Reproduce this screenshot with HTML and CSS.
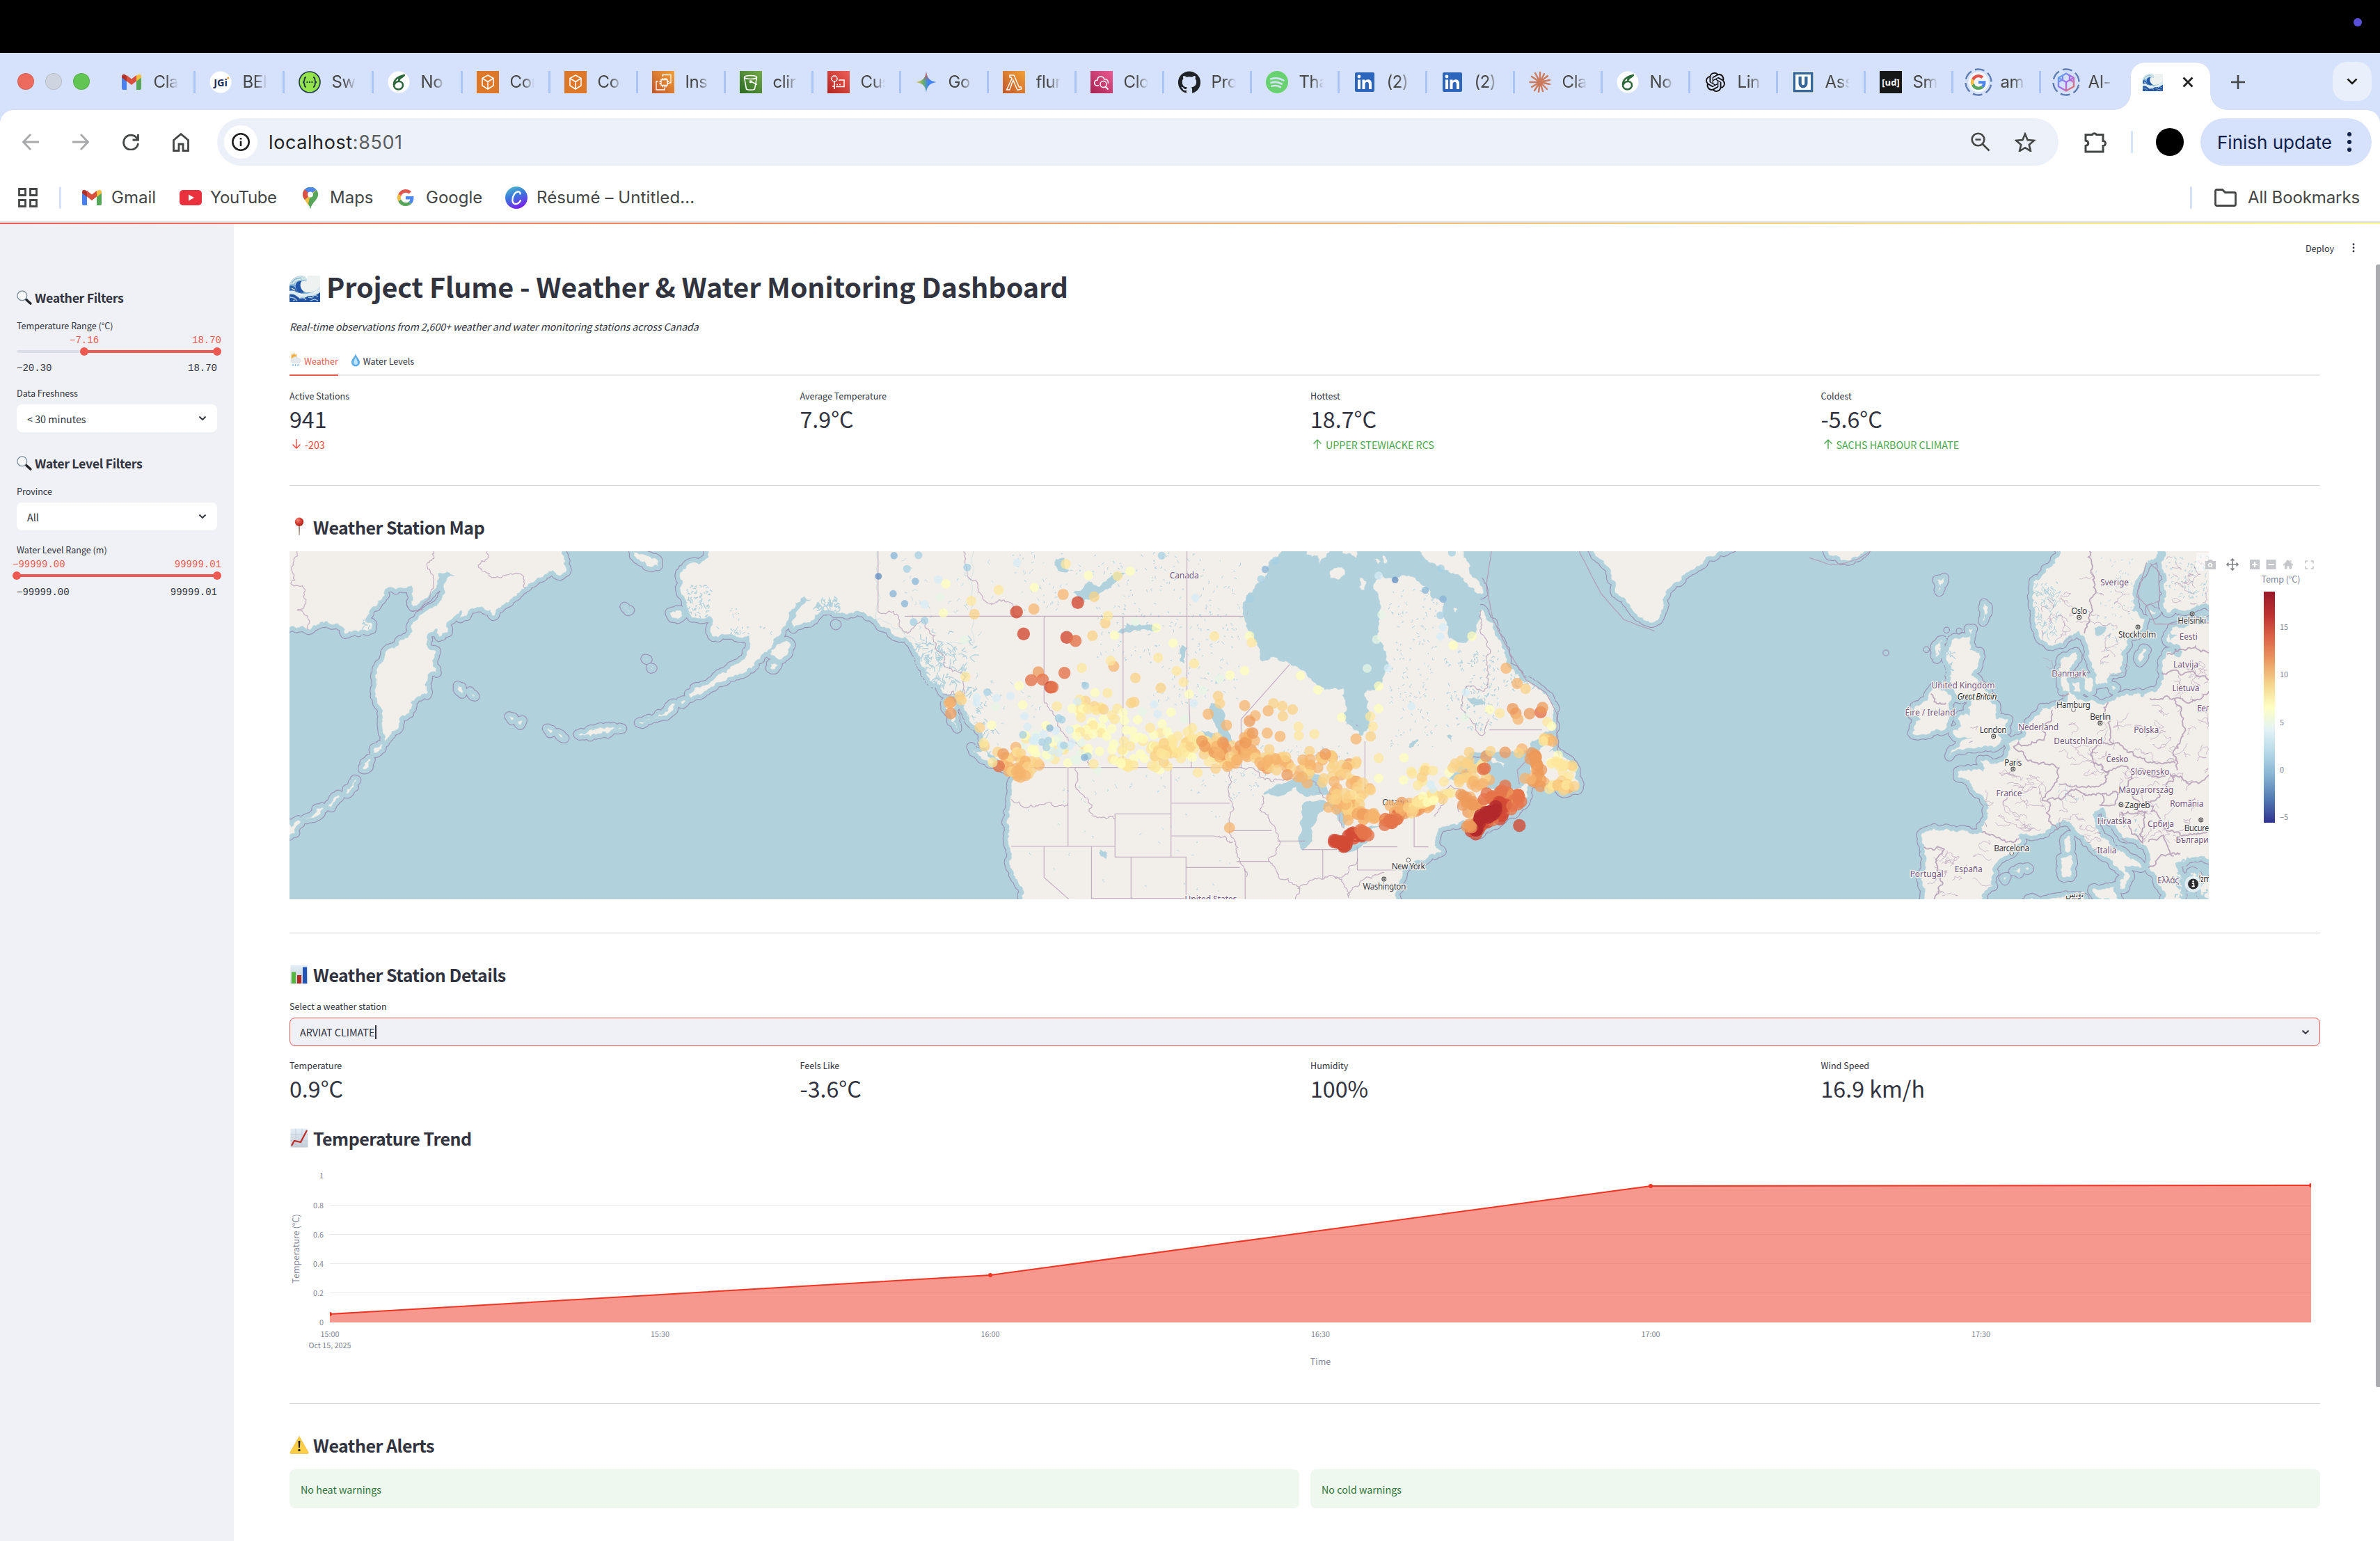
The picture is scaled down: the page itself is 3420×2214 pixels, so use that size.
FILE: index.html
```html
<!DOCTYPE html>
<html lang="en">
<head>
<meta charset="utf-8">
<title>Project Flume</title>
<link rel="stylesheet" href="styles.css">
</head>
<body>
<svg class="defs" width="0" height="0" aria-hidden="true">
  <defs>
    <linearGradient id="gOrange" x1="0" y1="1" x2="1" y2="0"><stop offset="0" stop-color="#c1562b"/><stop offset="1" stop-color="#f3a136"/></linearGradient>
    <linearGradient id="gGreen" x1="0" y1="1" x2="1" y2="0"><stop offset="0" stop-color="#2c6a22"/><stop offset="1" stop-color="#75ab4b"/></linearGradient>
    <linearGradient id="gRed" x1="0" y1="1" x2="1" y2="0"><stop offset="0" stop-color="#b3231f"/><stop offset="1" stop-color="#f0605a"/></linearGradient>
    <linearGradient id="gPink" x1="0" y1="1" x2="1" y2="0"><stop offset="0" stop-color="#a52350"/><stop offset="1" stop-color="#ec5a93"/></linearGradient>
    <linearGradient id="gGem" x1="0" y1="0" x2="1" y2="0"><stop offset="0" stop-color="#f2c33c"/><stop offset=".35" stop-color="#64b06c"/><stop offset=".6" stop-color="#4384f4"/><stop offset="1" stop-color="#4384f4"/></linearGradient>
    <linearGradient id="gGemTop" x1="0" y1="0" x2="0" y2="1"><stop offset="0" stop-color="#ea4335"/><stop offset=".45" stop-color="#ea4335" stop-opacity="0"/></linearGradient>
    <linearGradient id="gCanva" x1="0" y1="0" x2=".4" y2="1"><stop offset="0" stop-color="#4fc3c8"/><stop offset=".5" stop-color="#3a78dc"/><stop offset="1" stop-color="#7429ea"/></linearGradient>
    <linearGradient id="gCube" x1="0" y1="0" x2="1" y2="1"><stop offset="0" stop-color="#4fb4f2"/><stop offset=".5" stop-color="#a26cf0"/><stop offset="1" stop-color="#f4744f"/></linearGradient>
    <linearGradient id="gSheet" x1="0" y1="0" x2="0" y2="1"><stop offset="0" stop-color="#e4eef6"/><stop offset="1" stop-color="#c3ccd6"/></linearGradient>
    <linearGradient id="gTemp" x1="0" y1="0" x2="0" y2="1"><stop offset="0" stop-color="#98182a"/><stop offset=".1" stop-color="#bd3230"/><stop offset=".2" stop-color="#dd6448"/><stop offset=".3" stop-color="#eb9b62"/><stop offset=".4" stop-color="#f5d58c"/><stop offset=".5" stop-color="#feffc2"/><stop offset=".6" stop-color="#e2f2f6"/><stop offset=".7" stop-color="#b4d8e7"/><stop offset=".8" stop-color="#83b1d1"/><stop offset=".9" stop-color="#5079b3"/><stop offset="1" stop-color="#313390"/></linearGradient>
    <radialGradient id="gPin" cx=".35" cy=".3" r=".8"><stop offset="0" stop-color="#f08a7c"/><stop offset=".5" stop-color="#d43b30"/><stop offset="1" stop-color="#9c2019"/></radialGradient>

    <symbol id="gmail" viewBox="0 0 32 32"><path fill="#4a80ee" d="M2 8l7 5v14H4a2 2 0 0 1-2-2z"/><path fill="#56a65a" d="M23 13l7-5v17a2 2 0 0 1-2 2h-5z"/><path fill="#d94f3e" d="M9 6l7 5.500 7-5.500v8.500L16 20l-7-5.500z"/><path fill="#b0332a" d="M2 8c0-3 3-4 5-2.600L9 7v8L2 9.500z"/><path fill="#f3be42" d="M30 8c0-3-3-4-5-2.600L23 7v8l7-5.500z"/></symbol>
    <symbol id="jgi" viewBox="0 0 32 32"><circle cx="16" cy="16" r="15.500" fill="#fff"/><text x="16" y="21.500" class="ico-jgi">JGi</text><circle cx="26.800" cy="10" r="1.600" fill="#f0a13b"/></symbol>
    <symbol id="swagger" viewBox="0 0 32 32"><circle cx="16" cy="16" r="15" fill="#94e34c" stroke="#20394a" stroke-width="1.600"/><path d="M11 9c-5 0 0 7-5 7 5 0 0 7 5 7M21 9c5 0 0 7 5 7-5 0 0 7-5 7" fill="none" stroke="#20394a" stroke-width="1.800"/><path d="M11.500 16h2M15 16h2M18.500 16h2" stroke="#20394a" stroke-width="2"/></symbol>
    <symbol id="overleaf" viewBox="0 0 32 32"><circle cx="16" cy="16" r="15.500" fill="#fff"/><path d="M24 6C14 8 9 13 9 20c0 4 3 6.500 6.500 6.500S22 24 22 20.500 19.500 15 16 15c-3 0-5 2-6 4M24 6c-5 2-7 5-8 8" fill="none" stroke="#2c683c" stroke-width="2.600" stroke-linecap="round"/><path d="M13 11C16 7 20 6 25 6c-3 5-7 6-12 5z" fill="#2c683c"/></symbol>
    <symbol id="cube" viewBox="0 0 32 32"><rect width="32" height="32" fill="#dd782b"/><path d="M16 6l8 4.500v10.500L16 26l-8-5V10.500zM8 10.500l8 5 8-5M16 15.500V26" fill="none" stroke="#fff" stroke-width="1.500"/></symbol>
    <symbol id="chip" viewBox="0 0 32 32"><rect width="32" height="32" fill="url(#gOrange)"/><path d="M13 12.500h9v8h-9zM15 10v2.500M17.500 10v2.500M20 10v2.500M15 20.500v3M17.500 20.500v3M20 20.500v3M10.500 15H13M10.500 18H13M22 15h2.500M22 18h2.500M15 8V5.500h12V17h-2.500M8.500 15H6v12h12v-3" fill="none" stroke="#fff" stroke-width="1.300"/></symbol>
    <symbol id="bucket" viewBox="0 0 32 32"><rect width="32" height="32" fill="url(#gGreen)"/><path d="M6.500 9l3 17c3 1.700 9 1.700 12 0l3-17M16 15l9 4.500" fill="none" stroke="#fff" stroke-width="1.500"/><ellipse cx="15.500" cy="9" rx="9" ry="2.600" fill="none" stroke="#fff" stroke-width="1.500"/><path d="M14 13.500h3.500V17H14z" fill="#fff"/></symbol>
    <symbol id="custom" viewBox="0 0 32 32"><rect width="32" height="32" fill="url(#gRed)"/><circle cx="10" cy="11" r="4" fill="none" stroke="#fff" stroke-width="1.500"/><path d="M10 15v11M7 22h3M16 13h8v9.500H12M13 19.500h2M17 19.500h2" fill="none" stroke="#fff" stroke-width="1.500"/></symbol>
    <symbol id="gemini" viewBox="0 0 32 32"><path fill="url(#gGem)" d="M16 1c1 9 5 13.500 14.500 15C21 17.500 17 22 16 31 15 22 11 17.500 1.500 16 11 14.500 15 10 16 1z"/><path fill="url(#gGemTop)" d="M16 1c1 9 5 13.500 14.500 15C21 17.500 17 22 16 31 15 22 11 17.500 1.500 16 11 14.500 15 10 16 1z"/></symbol>
    <symbol id="lambda" viewBox="0 0 32 32"><rect width="32" height="32" fill="url(#gOrange)"/><path d="M10 6h6l7.500 17.500 2.500-.8 1 3-6 1.800-6.200-14.500-5 14H5.500L13 11l-1-2h-2z" fill="none" stroke="#fff" stroke-width="1.400"/></symbol>
    <symbol id="cloudw" viewBox="0 0 32 32"><rect width="32" height="32" fill="url(#gPink)"/><path d="M12 21H9c-5-1-4-8 1-8 0-6 8-7 10-1 4-1 6 3 5.500 6" fill="none" stroke="#fff" stroke-width="1.500"/><circle cx="18.500" cy="19" r="4.500" fill="none" stroke="#fff" stroke-width="1.500"/><path d="M21.500 22.500l4 4" stroke="#fff" stroke-width="2"/></symbol>
    <symbol id="github" viewBox="0 0 24 24"><path fill="#1f2328" d="M12 .3a12 12 0 0 0-3.800 23.400c.6.100.8-.3.800-.6v-2.200c-3.300.7-4-1.400-4-1.400-.6-1.400-1.400-1.800-1.400-1.800-1-.7.100-.7.100-.7 1.200 0 1.900 1.200 1.900 1.200 1 1.800 2.800 1.300 3.500 1 0-.8.400-1.300.7-1.600-2.700-.3-5.500-1.300-5.500-6 0-1.200.5-2.300 1.300-3.100-.2-.4-.6-1.600 0-3.200 0 0 1-.3 3.400 1.200a11.500 11.500 0 0 1 6 0c2.300-1.500 3.300-1.200 3.300-1.200.6 1.600.2 2.800 0 3.200.9.800 1.300 1.900 1.300 3.200 0 4.600-2.800 5.600-5.500 5.900.5.400.9 1 .9 2.200v3.300c0 .3.100.7.800.6A12 12 0 0 0 12 .3"/></symbol>
    <symbol id="spotify" viewBox="0 0 32 32"><circle cx="16" cy="16" r="16" fill="#67d26f"/><path d="M7 11.500c6-1.800 13-1.200 18.500 2M7.500 16.800c5-1.500 11-.9 15.500 1.800M8.500 21.700c4-1.200 8.500-.7 12.500 1.500" fill="none" stroke="#d6e1fb" stroke-width="2.600" stroke-linecap="round"/></symbol>
    <symbol id="linkedin" viewBox="0 0 32 32"><rect x="2" y="2" width="28" height="28" rx="2" fill="#2b66bc"/><path d="M6 12.500h4V26H6zM12.500 12.500h4v2c2-3.200 9.500-3.400 9.500 3.500v8h-4v-7c0-4.500-5.500-4-5.500 0v7h-4z" fill="#fff"/><circle cx="8" cy="8" r="2.400" fill="#fff"/></symbol>
    <symbol id="claude" viewBox="0 0 32 32"><path d="M16 16V2M16 16l6-12M16 16L27 7M16 16l14-3M16 16l14 3M16 16l10 10M16 16l4 13M16 16l-2 14M16 16L8 28M16 16L4 23M16 16H1.500M16 16L4 8M16 16L9 3" stroke="#cd7a5c" stroke-width="2.400" stroke-linecap="round"/></symbol>
    <symbol id="openai" viewBox="0 0 24 24"><path fill="#111" d="M22.300 9.800a6 6 0 0 0-.5-4.900 6 6 0 0 0-6.500-2.900A6.100 6.100 0 0 0 5 4.200a6 6 0 0 0-4 2.900 6 6 0 0 0 .7 7.100 6 6 0 0 0 .5 4.900 6 6 0 0 0 6.500 2.900A6 6 0 0 0 13.300 24a6 6 0 0 0 5.700-4.200 6 6 0 0 0 4-2.900 6 6 0 0 0-.7-7.100zm-9 12.600a4.500 4.500 0 0 1-2.900-1l5-2.900a.8.800 0 0 0 .3-.7v-6.700l2 1.200v5.600a4.500 4.500 0 0 1-4.400 4.500zM3.600 18.300a4.500 4.500 0 0 1-.5-3l4.900 2.800a.8.800 0 0 0 .8 0l5.800-3.400v2.400L9.700 20a4.500 4.500 0 0 1-6.100-1.700zM2.300 7.900a4.500 4.500 0 0 1 2.400-2v5.700a.8.800 0 0 0 .4.700l5.800 3.300-2 1.200-4.900-2.800a4.500 4.500 0 0 1-1.700-6.100zm16.600 3.900l-5.800-3.400 2-1.200L20 10a4.500 4.500 0 0 1-.7 8.100v-5.700a.8.800 0 0 0-.4-.6zm2-3.100l-4.800-2.800a.8.800 0 0 0-.8 0L9.400 9.300V6.900l4.900-2.800a4.500 4.500 0 0 1 6.600 4.600zM8.300 12.900l-2-1.200V6.100a4.500 4.500 0 0 1 7.400-3.500l-5 2.900a.8.800 0 0 0-.4.600zm1.100-2.400L12 9l2.600 1.500v3L12 15l-2.600-1.500z"/></symbol>
    <symbol id="usq" viewBox="0 0 32 32"><rect width="32" height="32" fill="#eef4f8"/><rect x="1.500" y="1.500" width="29" height="29" fill="#37679a"/><rect x="5" y="5" width="22" height="22" fill="#fff"/><path d="M9.500 8v10a6.500 6.500 0 0 0 13 0V8h-4.300v10c0 3-4.400 3-4.400 0V8z" fill="#37679a"/></symbol>
    <symbol id="udsq" viewBox="0 0 32 32"><rect width="32" height="32" fill="#161818"/><text x="16" y="21" class="ico-ud">[ud]</text></symbol>
    <symbol id="google" viewBox="0 0 48 48"><path fill="#e2544a" d="M24 9.500c3.500 0 6.700 1.200 9.200 3.600l6.900-6.900A24 24 0 0 0 2.600 13.200l8 6.200C12.400 13.700 17.700 9.500 24 9.500z"/><path fill="#4d86ee" d="M47 24.600c0-1.600-.2-3.100-.4-4.600H24v9h12.900a11 11 0 0 1-4.700 7.200l7.700 6c4.500-4.200 7.100-10.400 7.100-17.600z"/><path fill="#f2bd42" d="M10.500 28.600a14.500 14.500 0 0 1 0-9.200l-8-6.200a24 24 0 0 0 0 21.600z"/><path fill="#58a65c" d="M24 48c6.500 0 11.900-2.100 15.900-5.800l-7.700-6A14.500 14.500 0 0 1 10.500 28.600l-8 6.200A24 24 0 0 0 24 48z"/></symbol>
    <symbol id="gring" viewBox="0 0 40 40"><circle cx="20" cy="20" r="18.500" fill="none" stroke="#5f7db2" stroke-width="2.400" stroke-dasharray="14 5.400" transform="rotate(12 20 20)"/><circle cx="20" cy="20" r="14.500" fill="#f3f6fd"/><use href="#google" x="9" y="9" width="22" height="22"/></symbol>
    <symbol id="cring" viewBox="0 0 40 40"><circle cx="20" cy="20" r="18.500" fill="none" stroke="#5f7db2" stroke-width="2.400" stroke-dasharray="14 5.400" transform="rotate(12 20 20)"/><path d="M20 7.500l11 6.200v12.600L20 32.500 9 26.300V13.700zM9 13.700l11 6.300 11-6.300M20 20v12.500M15 10.500v6l-6 3.300M25 10.500v6l6 3.300" fill="none" stroke="url(#gCube)" stroke-width="2.400" stroke-linejoin="round"/></symbol>
    <symbol id="wave" viewBox="0 0 44 38"><path d="M0 13C2 5 11-1 19 .5c5 1 7 5 5 8.500-3-2-7-1-8 2-3 8 5 14 13 13 6-1 11-4 15-8v22H0z" fill="#7fb0d4"/><path d="M24 9c-3-2-7-1-8 2-3 8 5 14 13 13 6-1 11-4 15-8V0H26z" fill="#eef3f2"/><path d="M0 13C2 5 11-1 19 .5c5 1 7 5 5 8.500-2-3-5-3-7-1-4-1-7 1-8 5-2-1-5-1-9 0z" fill="#cfe3e6"/><path d="M9 13c1-4 4-6 8-5-3 6-1 12 5 16l-6 1c-5-2-8-7-7-12z" fill="#2156a8"/><path d="M3 11c3-6 9-8 14-7.500M5 14c4-5 8-7 13-8" stroke="#7fb4cd" stroke-width="1.200" fill="none"/><path d="M0 15c4-1 6 0 8 2 2 5 6 8 12 9l-8 4-12-2z" fill="#2e64a6"/><path d="M0 22c5-1 8 0 11 2 6 2 12 3 18 1 6-1 11-5 15-9v8c-5 4-9 5-13 5l-6 5H0z" fill="#dcebf0"/><path d="M0 27c4-1 8 0 11 3 5 4 11 3 16-1 6 1 11 0 17-5v14H0z" fill="#2454a0"/><path d="M1 31l6 1 4 4M14 33l5-2 5 4M27 31l5 1 4-4 5 2M30 36l6-2 5 2M5 36l3-1" stroke="#a9cbe0" stroke-width="1.300" fill="none"/><path d="M3 18l5 3M14 27l5 1M35 24l5-3" stroke="#fff" stroke-width="1.200"/></symbol>
    <symbol id="lens" viewBox="0 0 22 21"><circle cx="7.800" cy="7.800" r="6.900" fill="#f6f8fa" stroke="#7d8d9c" stroke-width="1.300"/><path d="M12.700 12.500l2 1.800" stroke="#777" stroke-width="1.800"/><path d="M14.300 14l5.500 5" stroke="#23262b" stroke-width="3.600" stroke-linecap="round"/></symbol>
    <symbol id="pin" viewBox="0 0 28 28"><path d="M13 12h2.200l-.5 14h-1.200z" fill="#a8897c"/><circle cx="14" cy="6.800" r="6.200" fill="url(#gPin)"/></symbol>
    <symbol id="bars" viewBox="0 0 28 28"><rect x="1.500" y=".5" width="25" height="27" fill="url(#gSheet)"/><path d="M3 10.500h6V27H3z" fill="#55b63c"/><path d="M11 15h6v12h-6z" fill="#b32821"/><path d="M19 3.500h6V27h-6z" fill="#2153b8"/></symbol>
    <symbol id="trend" viewBox="0 0 28 28"><rect x="1.500" y=".5" width="25" height="27" fill="url(#gSheet)"/><path d="M9 .5v27M18 .5v27M1.500 9h25M1.500 18h25" stroke="#b9c6d2" stroke-width=".7"/><path d="M3 25l4-7 9 2 9-17" fill="none" stroke="#c02b26" stroke-width="2.200"/></symbol>
    <symbol id="warn" viewBox="0 0 28 28"><path d="M14 1.500L27 24.500c.5 1 0 2-1.200 2H2.200C1 26.500.5 25.500 1 24.500z" fill="#fbce45" stroke="#e9b53a" stroke-width=".6"/><path d="M12.600 8h2.800l-.5 10h-1.800z" fill="#1b1b1b"/><circle cx="14" cy="21.500" r="1.700" fill="#1b1b1b"/></symbol>
    <symbol id="sunrain" viewBox="0 0 18 20"><circle cx="6.500" cy="6" r="4" fill="#f2ae3c"/><path d="M6.500 0v2M1 6H0M2.500 2l1 1M10.500 2l-1 1" stroke="#f2ae3c" stroke-width="1.200"/><path d="M4.500 14.500a3.600 3.600 0 0 1 0-7c1.500-3 6.500-3 8 0 5 .3 5 7 0 7z" fill="#e6eaee" stroke="#cfd4da" stroke-width=".5"/><path d="M5.500 16l-.8 3M9 16l-.8 3M12.500 16l-.8 3" stroke="#7ab8e8" stroke-width="1.300"/></symbol>
    <symbol id="drop" viewBox="0 0 14 20"><path d="M7 1c1 5 6 8 6 12.500a6 6 0 0 1-12 0C1 9 6 6 7 1z" fill="#58abe6"/><path d="M7 6c1 3 3 5 3 8a3 3 0 0 1-6 0c0-3 2-5 3-8z" fill="#bfe3f8"/></symbol>
    <symbol id="chev" viewBox="0 0 12 8"><path d="M1.500 1.500L6 6l4.500-4.500" fill="none" stroke="#31333f" stroke-width="1.900"/></symbol>
    <symbol id="up" viewBox="0 0 14 16"><path d="M7 15V2M1.500 7.500L7 2l5.500 5.500" fill="none" stroke="currentColor" stroke-width="1.400"/></symbol>
  </defs>
</svg>

<div class="screen-top"><span class="cam-dot"></span></div>

<header class="tabstrip">
  <div class="lights"><i class="light red"></i><i class="light grey"></i><i class="light green"></i></div>
  <div class="tabs-row">
    <div class="tab wide first"><svg><use href="#gmail"/></svg><span>Cla</span></div>
    <div class="tab wide"><svg><use href="#jgi"/></svg><span>BEI</span></div>
    <div class="tab wide"><svg><use href="#swagger"/></svg><span>Sw</span></div>
    <div class="tab wide"><svg><use href="#overleaf"/></svg><span>No</span></div>
    <div class="tab"><svg><use href="#cube"/></svg><span>Con</span></div>
    <div class="tab"><svg><use href="#cube"/></svg><span>Co</span></div>
    <div class="tab"><svg><use href="#chip"/></svg><span>Ins</span></div>
    <div class="tab"><svg><use href="#bucket"/></svg><span>clir</span></div>
    <div class="tab"><svg><use href="#custom"/></svg><span>Cus</span></div>
    <div class="tab"><svg><use href="#gemini"/></svg><span>Go</span></div>
    <div class="tab"><svg><use href="#lambda"/></svg><span>flur</span></div>
    <div class="tab"><svg><use href="#cloudw"/></svg><span>Clo</span></div>
    <div class="tab"><svg><use href="#github"/></svg><span>Pro</span></div>
    <div class="tab"><svg><use href="#spotify"/></svg><span>Tha</span></div>
    <div class="tab"><svg><use href="#linkedin"/></svg><span>(2)</span></div>
    <div class="tab"><svg><use href="#linkedin"/></svg><span>(2)</span></div>
    <div class="tab"><svg><use href="#claude"/></svg><span>Cla</span></div>
    <div class="tab"><svg><use href="#overleaf"/></svg><span>No</span></div>
    <div class="tab"><svg class="pad"><use href="#openai"/></svg><span>Lin</span></div>
    <div class="tab"><svg><use href="#usq"/></svg><span>Ass</span></div>
    <div class="tab"><svg><use href="#udsq"/></svg><span>Sm</span></div>
    <div class="tab ring"><svg><use href="#gring"/></svg><span>am</span></div>
    <div class="tab ring"><svg><use href="#cring"/></svg><span>AI-</span></div>
    <div class="tab-active">
      <svg class="fav"><use href="#wave"/></svg>
      <svg class="close" viewBox="0 0 16 16"><path d="M1.500 1.500l13 13M14.500 1.500l-13 13"/></svg>
    </div>
    <svg class="plus" viewBox="0 0 20 20"><path d="M10 0v20M0 10h20"/></svg>
  </div>
  <div class="tabsearch"><svg viewBox="0 0 16 10"><path d="M1.500 1.500L8 8l6.500-6.500"/></svg></div>
</header>

<section class="chrome">
  <div class="toolbar">
    <svg class="nav dim" viewBox="0 0 24 24"><path d="M12 1L1.500 12 12 23M1.500 12H24"/></svg>
    <svg class="nav dim" viewBox="0 0 24 24"><path d="M12 1l10.500 11L12 23M22.500 12H0"/></svg>
    <svg class="nav" viewBox="0 0 24 24"><path d="M21 7A10.500 10.500 0 1 0 22.500 14M22.500 1v8h-8"/></svg>
    <svg class="nav home" viewBox="0 0 24 28"><path d="M1.500 11.500L12 2.500l10.500 9V26.500h-7.500V17h-6v9.500H1.500z"/></svg>
    <div class="omnibox">
      <span class="info"><svg viewBox="0 0 26 26"><circle cx="13" cy="13" r="11.700"/><path d="M13 11.500V19M13 7v2.500"/></svg></span>
      <span class="url">localhost<b>:8501</b></span>
      <svg class="zoomi" viewBox="0 0 28 28"><circle cx="10.500" cy="10.500" r="8.800"/><path d="M17 17l9.500 9.500M6.500 10.500h8"/></svg>
      <svg class="star" viewBox="0 0 30 28"><path d="M15 2.500l3.600 8.600 9.300.8-7.100 6.100 2.200 9.100L15 22.200l-8 4.900 2.200-9.100-7.100-6.100 9.300-.8z"/></svg>
    </div>
    <svg class="puzzle" viewBox="0 0 32 32"><path d="M2 5.500h9.500a3.500 3.500 0 0 1 6 0H27v9a3.500 3.500 0 0 1 0 7V30H2v-8.500c5-1 5-6.500 0-7.500z"/></svg>
    <span class="vsep tool"></span>
    <span class="avatar"></span>
    <div class="update"><span>Finish update</span><i><em></em><em></em><em></em></i></div>
  </div>
  <div class="bookmarks">
    <svg class="grid" viewBox="0 0 28 28"><path d="M1.500 1.500h9v9h-9zM17.500 1.500h9v9h-9zM1.500 17.500h9v9h-9zM17.500 17.500h9v9h-9z"/></svg>
    <span class="vsep"></span>
    <svg class="bm b-gmail"><use href="#gmail"/></svg><span class="t-gmail">Gmail</span>
    <svg class="bm b-yt" viewBox="0 0 32 32"><rect y="5" width="32" height="22" rx="5" fill="#e9323e"/><path d="M13 11.500l8 4.500-8 4.500z" fill="#fff"/></svg><span class="t-yt">YouTube</span>
    <svg class="bm b-maps" viewBox="0 0 22 31"><path d="M11 31C9 22 0 18 0 10.500A11 11 0 0 1 22 10.500C22 18 13 22 11 31z" fill="#58a65c"/><path d="M0 10.500A11 11 0 0 1 11 0L11 11z M11 0a11 11 0 0 1 9 4.500L11 11z" fill="#4d86ee"/><path d="M0 10.500C0 7 1.500 4.500 3 3l8 8-8 7C1 15.500 0 13 0 10.500z" fill="#dc5044"/><path d="M3 18l8-7 8-7.500L11 22l-3 4z" fill="#f2bd42"/><path d="M11 12l9-7.500c4 6 1 11-3 15-3 3-5 7-6 11.500-.6-3-1.500-5-3-7.500z" fill="#58a65c"/><circle cx="11" cy="10.500" r="3.900" fill="#fff"/></svg><span class="t-maps">Maps</span>
    <svg class="bm b-goog"><use href="#google"/></svg><span class="t-goog">Google</span>
    <svg class="bm b-canva" viewBox="0 0 32 32"><circle cx="16" cy="16" r="16" fill="url(#gCanva)"/><path d="M21.500 10.500c.5-4-5-4.500-8.500.5-4 6-3.500 13.500 1.500 14 3 .3 6-2 7.500-5" fill="none" stroke="#fff" stroke-width="2.300" stroke-linecap="round"/></svg><span class="t-canva">Résumé – Untitled...</span>
    <span class="vsep last"></span>
    <svg class="folder" viewBox="0 0 32 26"><path d="M1.500 3.500a2 2 0 0 1 2-2h8l4 4h13a2 2 0 0 1 2 2v15a2 2 0 0 1-2 2h-25a2 2 0 0 1-2-2z"/></svg>
    <span class="t-all">All Bookmarks</span>
  </div>
</section>

<div class="app">
  <aside class="sidebar">
    <h2><svg><use href="#lens"/></svg>Weather Filters</h2>
    <label>Temperature Range (°C)</label>
    <div class="slider">
      <div class="vals"><span style="left:33.700%">−7.16</span><span class="end">18.70</span></div>
      <div class="track"><i style="left:33.700%;right:0"></i><b style="left:33.700%"></b><b style="left:100%"></b></div>
      <div class="ends"><span>−20.30</span><span>18.70</span></div>
    </div>
    <label class="l2">Data Freshness</label>
    <div class="select">&lt; 30 minutes<svg><use href="#chev"/></svg></div>
    <h2 class="second"><svg><use href="#lens"/></svg>Water Level Filters</h2>
    <label>Province</label>
    <div class="select">All<svg><use href="#chev"/></svg></div>
    <label class="l3">Water Level Range (m)</label>
    <div class="slider">
      <div class="vals"><span class="start">−99999.00</span><span class="end">99999.01</span></div>
      <div class="track"><i style="left:0;right:0"></i><b style="left:0"></b><b style="left:100%"></b></div>
      <div class="ends"><span>−99999.00</span><span>99999.01</span></div>
    </div>
  </aside>

  <main class="main">
    <div class="deploy"><span>Deploy</span><svg viewBox="0 0 4 14"><circle cx="2" cy="2" r="1.400"/><circle cx="2" cy="7" r="1.400"/><circle cx="2" cy="12" r="1.400"/></svg></div>
    <h1><svg><use href="#wave"/></svg><span>Project Flume - Weather &amp; Water Monitoring Dashboard</span></h1>
    <p class="sub">Real-time observations from 2,600+ weather and water monitoring stations across Canada</p>
    <nav class="views">
      <a class="on"><svg class="sr"><use href="#sunrain"/></svg>Weather</a>
      <a><svg class="dr"><use href="#drop"/></svg>Water Levels</a>
    </nav>
    <section class="metrics top">
      <div><h4>Active Stations</h4><strong>941</strong><p class="delta down"><svg class="flip"><use href="#up"/></svg>-203</p></div>
      <div><h4>Average Temperature</h4><strong>7.9°C</strong></div>
      <div><h4>Hottest</h4><strong>18.7°C</strong><p class="delta"><svg><use href="#up"/></svg>UPPER STEWIACKE RCS</p></div>
      <div><h4>Coldest</h4><strong>-5.6°C</strong><p class="delta"><svg><use href="#up"/></svg>SACHS HARBOUR CLIMATE</p></div>
    </section>
    <hr class="hr1">
    <h3><svg><use href="#pin"/></svg><span>Weather Station Map</span></h3>
    <section class="mapbox">
      <svg id="map" class="map" viewBox="416 792 2758 500" width="2758" height="500"></svg>
      <svg class="legend" viewBox="3174 792 160 500" width="160" height="500">
        <rect x="3253" y="850" width="16" height="332" fill="url(#gTemp)"/>
        <text x="3249.500" y="837" class="lt" textLength="56">Temp (°C)</text>
        <g class="tick"><text x="3276" y="905">15</text><text x="3276" y="973">10</text><text x="3276" y="1042">5</text><text x="3276" y="1110">0</text><text x="3276" y="1178">−5</text></g>
      </svg>
      <svg class="modebar" viewBox="3156 794 178 28" width="178" height="28">
        <rect x="3156" y="794" width="178" height="26" fill="#fff" opacity=".5"/>
        <g fill="#c6c7ca">
          <path fill-rule="evenodd" d="M3169 806h3l1.500-2h5l1.500 2h4v12h-15zM3176 808.500a3.400 3.400 0 1 0 .1 0zM3176 810.300a1.700 1.700 0 1 1-.1 0z"/>
          <path fill-rule="evenodd" d="M3233 804h14v14h-14zM3239 807v3h-3v2h3v3h2v-3h3v-2h-3v-3z"/>
          <path fill-rule="evenodd" d="M3256.500 804h14v14h-14zM3259.500 810v2h8v-2z"/>
          <path d="M3288 804.500l7.500 7-1.200 1.200-1.300-1.200v6h-3.500v-4h-3v4h-3.500v-6l-1.300 1.200-1.200-1.200 5-4.700v-1.800z M3290.500 805h2v3l-2-2z"/>
        </g>
        <path d="M3208 803v16M3200 811h16M3205.500 805.500l2.500-2.500 2.500 2.500M3205.500 816.500l2.500 2.500 2.500-2.500M3202.500 808.500L3200 811l2.500 2.500M3213.500 808.500l2.500 2.500-2.500 2.500" stroke="#7f8185" stroke-width="1.600" fill="none"/>
        <path d="M3313 809.500V806h3.500M3320.500 806h3.500v3.500M3324 813.500v3.500h-3.500M3316.500 817h-3.500v-3.500" stroke="#c6c7ca" stroke-width="1.600" fill="none"/>
      </svg>
    </section>
    <hr class="hr2">
    <h3><svg><use href="#bars"/></svg><span>Weather Station Details</span></h3>
    <label class="pick">Select a weather station</label>
    <div class="station"><span>ARVIAT CLIMATE</span><i></i><svg><use href="#chev"/></svg></div>
    <section class="metrics detail">
      <div><h4>Temperature</h4><strong>0.9°C</strong></div>
      <div><h4>Feels Like</h4><strong>-3.6°C</strong></div>
      <div><h4>Humidity</h4><strong>100%</strong></div>
      <div><h4>Wind Speed</h4><strong>16.9 km/h</strong></div>
    </section>
    <h3 class="h-trend"><svg><use href="#trend"/></svg><span>Temperature Trend</span></h3>
    <svg class="chart" viewBox="416 1657 2918 320" width="2918" height="320">
      <path d="M474 1731.500H3321M474 1773.500H3321M474 1815.500H3321M474 1857.500H3321" stroke="#e8eaf0" stroke-width="1"/>
      <path d="M474 1888L1423 1832 2372 1704 3321 1703V1900H474z" fill="#f04030" fill-opacity=".54"/>
      <path d="M474 1888L1423 1832 2372 1704 3321 1703" fill="none" stroke="#ee3524" stroke-width="2"/>
      <g fill="#ee3524"><path d="M474 1885a3 3 0 0 1 0 6z"/><circle cx="1423" cy="1832" r="3"/><circle cx="2372" cy="1704" r="3"/><path d="M3321 1700a3 3 0 0 0 0 6z"/></g>
      <g class="ct end"><text x="465" y="1693">1</text><text x="465" y="1736">0.8</text><text x="465" y="1778">0.6</text><text x="465" y="1820">0.4</text><text x="465" y="1862">0.2</text><text x="465" y="1904">0</text></g>
      <g class="ct mid"><text x="474" y="1921">15:00</text><text x="474" y="1937">Oct 15, 2025</text><text x="948.500" y="1921">15:30</text><text x="1423" y="1921">16:00</text><text x="1897.500" y="1921">16:30</text><text x="2372" y="1921">17:00</text><text x="2846.500" y="1921">17:30</text></g>
      <g class="ct mid big"><text x="1897.500" y="1961">Time</text><text transform="translate(430 1794) rotate(-90)">Temperature (°C)</text></g>
    </svg>
    <hr class="hr3">
    <h3 class="h-alert"><svg><use href="#warn"/></svg><span>Weather Alerts</span></h3>
    <section class="alerts"><div>No heat warnings</div><div>No cold warnings</div></section>
    <span class="scroll"></span>
  </main>
</div>
<script src="map.js"></script>
</body>
</html>
```
FILE: styles.css
```css
* { box-sizing: border-box; margin: 0; padding: 0; }
body {
  width: 3420px; height: 2214px; overflow: hidden; background: #fff; color: #31333f;
  font-family: "Noto Sans CJK SC", "Noto Sans", sans-serif; font-size: 14.300px;
}
.defs { position: absolute; }
i, em { font-style: normal; }
svg { display: block; flex: none; }

/* browser frame */
.screen-top { height: 76px; background: #000; position: relative; }
.cam-dot { position: absolute; left: 3382px; top: 26px; width: 12px; height: 12px; border-radius: 50%; background: #5a50d8; }
.tabstrip, .chrome { font-family: Inter, "Liberation Sans", sans-serif; color: #444746; }
.tabstrip { height: 82px; background: #d6e1fb; display: flex; align-items: center; padding-left: 25px; padding-right: 12px; }
.lights { display: flex; gap: 16px; width: 124.500px; }
.light { width: 24px; height: 24px; border-radius: 50%; border: 1px solid rgba(0,0,0,.1); }
.light.red { background: #ed6a5e; } .light.grey { background: #cfd5e0; } .light.green { background: #61c554; }
.tabs-row { display: flex; align-items: center; height: 82px; flex: 1; padding-top: 1px; }
.tab { width: 126px; height: 32px; display: flex; align-items: center; border-left: 3px solid #abc4f7; padding-left: 20px; }
.tab.wide { width: 128px; }
.tab.first { border-left-color: transparent; }
.tab svg { width: 32px; height: 32px; }
.tab svg.pad { width: 28px; height: 28px; margin: 0 2px; }
.tab.ring { padding-left: 16px; }
.tab.ring svg { width: 40px; height: 40px; }
.tab.ring span { margin-left: 12px; }
.tab span {
  margin-left: 16px; width: 35px; overflow: hidden; white-space: nowrap; font-size: 24px; line-height: 32px; letter-spacing: -.4px;
  -webkit-mask-image: linear-gradient(90deg, #000 50%, transparent); mask-image: linear-gradient(90deg, #000 50%, transparent);
}
.tab-active {
  position: relative; margin-left: 6px; width: 114px; height: 68px; align-self: flex-end; background: #fff; border-radius: 20px 20px 0 0;
  display: flex; align-items: center; padding: 0 24px 12px 17px; justify-content: space-between;
}
.tab-active::before, .tab-active::after { content: ""; position: absolute; bottom: 0; width: 24px; height: 24px; }
.tab-active::before { left: -24px; background: radial-gradient(circle at 0 0, transparent 23.500px, #fff 24px); }
.tab-active::after { right: -24px; background: radial-gradient(circle at 100% 0, transparent 23.500px, #fff 24px); }
.fav { width: 29px; height: 25px; }
.close { width: 16px; height: 16px; stroke: #1f1f1f; stroke-width: 2.800; }
.plus { width: 20px; height: 20px; margin-left: 30px; stroke: #444746; stroke-width: 2.600; }
.tabsearch { width: 56px; height: 56px; border-radius: 20px; background: #e9f0fc; display: flex; align-items: center; justify-content: center; }
.tabsearch svg { width: 16px; height: 10px; fill: none; stroke: #1f1f1f; stroke-width: 2.600; }

.chrome { position: relative; height: 164px; background: #fff; border-radius: 20px 20px 0 0; }
.chrome::before { content: ""; position: absolute; z-index: -1; inset: 0 0 120px; background: #d6e1fb; }
.chrome::after { content: ""; position: absolute; left: 0; right: 0; bottom: 0; height: 4px; background: linear-gradient(#dedede 50%, transparent 50%), linear-gradient(90deg, #ec5f57, #f2ae74 50%, #fdfb8e); }
.toolbar { height: 80px; padding-top: 12px; display: flex; align-items: center; padding-left: 32px; }
.nav { width: 24px; height: 24px; margin-right: 48px; fill: none; stroke: #444746; stroke-width: 2.800; }
.nav.dim { stroke: #a9aaab; }
.nav.home { height: 28px; margin-right: 40px; }
.omnibox { width: 2646px; height: 68px; border-radius: 34px; background: #ecf1f9; display: flex; align-items: center; padding-left: 10px; }
.info { width: 48px; height: 48px; border-radius: 50%; background: #fff; display: flex; align-items: center; justify-content: center; }
.info svg { width: 26px; height: 26px; fill: none; stroke: #1f1f1f; stroke-width: 2.600; }
.url { flex: 1; margin-left: 16px; font-size: 27px; letter-spacing: .6px; color: #1f1f1f; }
.url b { font-weight: 400; color: #5a5d60; }
.zoomi { width: 28px; height: 28px; fill: none; stroke: #444746; stroke-width: 2.600; margin-right: 35px; }
.star { width: 30px; height: 28px; fill: none; stroke: #444746; stroke-width: 2.600; margin-right: 33px; }
.puzzle { width: 32px; height: 32px; fill: none; stroke: #444746; stroke-width: 3; margin-left: 37px; }
.vsep { width: 3px; height: 32px; background: #d6e1fb; border-radius: 2px; }
.vsep.tool { margin-left: 35px; }
.avatar { width: 40px; height: 40px; border-radius: 50%; background: #000; margin-left: 33px; }
.update { margin-left: 24px; width: 246px; height: 68px; border-radius: 34px; background: #d6e1fb; color: #0f1f4a; display: flex; align-items: center; padding-left: 24px; font-size: 26px; white-space: nowrap; }
.update i { display: flex; flex-direction: column; gap: 5px; margin-left: auto; margin-right: 29px; }
.update em { width: 6px; height: 6px; border-radius: 50%; background: #0f1f4a; }
.bookmarks { height: 92px; display: flex; align-items: center; padding-left: 26px; font-size: 24px; white-space: nowrap; }
.bookmarks .grid { width: 28px; height: 28px; fill: none; stroke: #444746; stroke-width: 2.800; }
.bookmarks .vsep { margin-left: 31px; }
.bm { width: 32px; height: 32px; }
.b-gmail { margin-left: 28px; }
.bookmarks span[class^="t-"] { display: block; margin-top: -1px; }
.t-gmail { margin-left: 12px; width: 98px; }
.bookmarks .t-yt { margin-left: 12px; width: 133px; letter-spacing: -.4px; }
.bookmarks .b-maps { width: 22px; height: 31px; }
.t-maps { margin-left: 17px; width: 97px; }
.bookmarks .b-goog { width: 24px; height: 24px; }
.t-goog { margin-left: 17px; width: 113px; }
.t-canva { margin-left: 13px; flex: 1; letter-spacing: .1px; }
.b-canva { margin-left: 1px; }
.folder { width: 32px; height: 26px; fill: none; stroke: #444746; stroke-width: 2.800; margin-left: 32px; }
.t-all { margin-left: 16px; width: 190px; letter-spacing: -.1px; }
.ico-jgi { font: 700 14.500px "Open Sans", sans-serif; fill: #1c2f5c; text-anchor: middle; }
.ico-ud { font: 700 13px "Open Sans", sans-serif; fill: #fff; text-anchor: middle; }

/* dashboard */
.app { display: flex; height: 1892px; }
.sidebar { width: 336px; background: #f0f1f6; padding: 90px 24px 0; }
.sidebar h2 { height: 30px; display: flex; align-items: center; gap: 4px; font-size: 17.800px; font-weight: 700; letter-spacing: -.35px; line-height: 30px; }
.sidebar h2 svg { width: 22px; height: 21px; margin-top: 0; }
.sidebar h2.second { margin-top: 29px; }
label { display: block; height: 20px; line-height: 20px; font-size: 12.550px; }
.sidebar label { margin-top: 16px; }
.sidebar label.l2 { margin-top: 17px; }
.sidebar label.l3 { margin-top: 18px; }
.slider { font-family: "Liberation Mono", monospace; font-size: 14px; }
.vals { position: relative; height: 25px; padding-top: 1px; color: #ee5a52; line-height: 20px; }
.vals span { position: absolute; top: 1px; transform: translateX(-50%); }
.vals .end { left: auto; right: -6px; transform: none; }
.vals .start { left: -6px; transform: none; }
.track { position: relative; height: 4px; border-radius: 2px; background: #dcdfe9; }
.track i { position: absolute; top: 0; bottom: 0; background: #ee5a52; }
.track b { position: absolute; top: -4px; width: 12px; height: 12px; margin-left: -6px; border-radius: 50%; background: #ee5a52; }
.ends { display: flex; justify-content: space-between; height: 31px; padding-top: 12px; line-height: 20px; }
.select { height: 40px; margin-top: 6px; border-radius: 8px; background: #fff; display: flex; align-items: center; justify-content: space-between; padding: 0 15px; font-size: 14.300px; }
.select svg, .station svg { width: 12px; height: 8px; }

.main { position: relative; width: 3084px; padding: 63px 86px 0 80px; }
.deploy { position: absolute; top: 24px; right: 36px; height: 20px; display: flex; align-items: center; gap: 26px; font-size: 12.550px; }
.deploy svg { width: 4px; height: 14px; fill: #31333f; }
h1 { height: 60px; display: flex; align-items: center; font-size: 39.600px; font-weight: 700; letter-spacing: -.15px; white-space: nowrap; }
h1 svg { width: 44px; height: 38px; margin-right: 9px; }
h1 span { line-height: 60px; height: 68px; }
.sub { margin-top: 13px; height: 24px; line-height: 23px; font-style: italic; font-size: 14.200px; letter-spacing: -.05px; }
.views { margin-top: 14px; height: 44px; display: flex; gap: 18px; box-shadow: inset 0 -2px #e8e9ec; font-size: 12.550px; }
.views a { display: flex; align-items: center; }
.views a.on { color: #ee5a52; box-shadow: inset 0 -2px #ee5a52; }
.views .sr { width: 18px; height: 20px; margin-right: 3px; margin-top: -3px; }
.views .dr { width: 14px; height: 20px; margin-right: 4px; margin-top: -3px; }
.metrics { display: grid; grid-template-columns: repeat(4, 1fr); gap: 16px; margin-top: 19px; }
.metrics h4 { height: 20px; line-height: 19px; font-weight: 400; font-size: 12.550px; }
.metrics strong { display: block; margin-top: 1px; height: 44px; line-height: 43px; font-weight: 400; font-size: 32.200px; }
.delta { display: flex; align-items: center; margin-top: 2px; height: 24px; margin-bottom: 2px; padding-left: 3px; font-size: 14.300px; color: #4ba84c; white-space: nowrap; }
.delta svg { width: 14px; height: 16px; margin-right: 5px; }
.delta.down { color: #ee4438; }
.delta .flip { transform: scaleY(-1); }
.detail strong { margin-bottom: 1px; }
hr { border: 0; height: 1px; background: #d5d6d9; }
.hr1 { margin-top: 45px; } .hr2 { margin-top: 48px; } .hr3 { margin-top: 39px; }
h3 { margin-top: 40px; height: 40px; display: flex; align-items: center; font-size: 25px; font-weight: 700; letter-spacing: -.5px; }
h3 span { height: 38px; line-height: 36px; }
h3 svg { width: 28px; height: 28px; margin-right: 6px; margin-top: -2px; }
.h-trend { margin-top: 29px; }
.mapbox { position: relative; display: flex; margin-top: 14px; }
.modebar { position: absolute; left: 2740px; top: 2px; }
.lt { font-size: 12.550px; fill: #808495; }
.tick { font-size: 10.800px; fill: #808495; }
.pick { margin-top: 15px; }
.station { margin-top: 6px; height: 41px; border: 1.500px solid #ee5a52; border-radius: 8px; background: #f0f1f6; display: flex; align-items: center; padding: 0 14px; }
.detail { margin-top: 18px; }
.station span { font-size: 14.300px; }
.station i { width: 2px; height: 20px; background: #31333f; margin-left: 1px; }
.station svg { margin-left: auto; }
.chart { margin-top: 1px; }
.ct { font-size: 10.750px; fill: #808495; }
.ct.end { text-anchor: end; } .ct.mid { text-anchor: middle; } .ct.big { font-size: 12.550px; }
.alerts { margin-top: 14px; display: grid; grid-template-columns: 1fr 1fr; gap: 16px; }
.alerts div { height: 56px; border-radius: 8px; background: #eef8ef; color: #2f7338; display: flex; align-items: center; padding: 0 16px; font-size: 14.300px; }
.scroll { position: absolute; right: 0; top: 58px; width: 6px; height: 1613px; border-radius: 3px 0 0 3px; background: #abacaf; }

/* map text */
.m-country { fill: #735681; } .m-city { fill: #33333a; } .m-isle { fill: #222; font-style: italic; }
.m-text { font-family: "Noto Sans", sans-serif; text-anchor: middle; paint-order: stroke; stroke: #f8f5f2; stroke-width: 2.600px; stroke-linejoin: round; }
```
FILE: map.js
```js
(function () {
  const NS = 'http://www.w3.org/2000/svg';
  const map = document.getElementById('map');
  let seed = 7;
  const rnd = () => (seed = (seed * 16807) % 2147483647) / 2147483647;
  // Each region keeps its own grid: [origin x, x scale].
  const GRID = { P: [400, 0.63776], A: [1300, 0.63776], E: [2600, 0.48469] };
  const at = (g, x, y) => [GRID[g][0] + x * GRID[g][1], 780 + y / 3];
  const el = (n, a, p) => { const e = document.createElementNS(NS, n); for (const k in a) e.setAttribute(k, a[k]); (p || map).appendChild(e); return e; };
  const pts = (g, s) => { const n = s.trim().split(/\s+/).map(Number), o = []; for (let i = 0; i < n.length; i += 2) o.push(at(g, n[i], n[i + 1])); return o; };
  function rough(p, closed, amp) {
    let r = p.slice(); if (closed) r.push(p[0]);
    for (let k = 0; k < 4; k++) {
      const q = [r[0]];
      for (let i = 1; i < r.length; i++) {
        const a = r[i - 1], b = r[i], dx = b[0] - a[0], dy = b[1] - a[1], l = Math.hypot(dx, dy);
        if (l > 4) { const lim = Math.min(1, 16 / l), t = (rnd() - 0.5) * amp * lim; q.push([(a[0] + b[0]) / 2 - dy * t, (a[1] + b[1]) / 2 + dx * t]); }
        q.push(b);
      }
      r = q;
    }
    return 'M' + r.map(v => v[0].toFixed(1) + ' ' + v[1].toFixed(1)).join('L') + (closed ? 'Z' : '');
  }

  const land = [
    ['P', '0 0 640 0 640 36 643 90 648 125 638 138 610 122 598 140 575 170 555 195 535 230 520 255 500 280 490 290 484 315 478 288 445 280 430 290 410 325 412 290 385 335 382 385 362 405 358 370 345 385 335 430 338 455 355 465 350 500 357 560 340 562 330 610 335 655 312 665 298 690 295 735 275 750 272 790 268 805 250 835 240 860 234 800 226 700 220 620 222 540 238 500 243 465 265 445 285 410 300 370 315 325 332 295 350 275 368 240 372 190 380 150 397 142 380 125 360 132 352 200 330 240 303 275 300 185 285 195 245 195 240 225 225 260 205 305 196 335 212 350 210 372 170 378 150 392 142 360 110 338 80 355 68 375 50 360 0 362'],
    ['P', '968 0 960 75 932 85 918 110 905 150 905 200 915 235 920 270 925 305 945 325 970 315 978 345 980 405 1020 395 1045 410 1060 400 1055 470 1045 505 1010 560 985 580 955 615 925 650 930 668 950 655 980 620 1010 590 1050 560 1075 510 1090 480 1110 455 1120 410 1135 370 1150 300 1165 260 1185 230 1200 245 1170 290 1160 330 1160 370 1190 345 1210 310 1240 290 1270 300 1320 300 1360 330 1400 370 1440 430 1568 430 1568 0'],
    ['P', '1140 425 1155 440 1148 480 1125 500 1108 480 1120 450'], ['P', '1110 520 1125 525 1118 545 1108 540'],
    ['P', '882 300 905 290 910 315 900 328 885 315'], ['P', '800 36 830 55 855 75 855 100 840 105 825 80 808 70'],
    ['P', '780 275 792 290 788 295'], ['P', '404 615 416 640 414 650 404 630'], ['P', '432 640 443 662 438 660'],
    ['P', '520 748 530 752 526 765'], ['P', '540 770 550 765 545 785'], ['P', '605 800 618 812 612 820'], ['P', '630 820 645 842 640 840'], ['P', '675 825 700 808 735 800 760 800 720 822 685 828'], ['P', '755 798 775 800 765 804'],
    ['P', '812 775 835 758 838 762 820 780'], ['P', '850 755 880 705 895 695 890 720 862 748'], ['P', '905 685 918 680 910 695'], ['P', '215 905 230 870 235 868 225 900'], ['P', '190 975 205 930 208 935 198 975'],
    ['P', '152 1080 172 1020 176 1022 160 1075'], ['P', '112 1135 135 1085 138 1095 120 1140'], ['P', '60 1190 98 1140 102 1145 75 1185'],
    ['P', '0 1210 30 1225 45 1195 50 1200 38 1250 0 1270'], ['P', '827 500 832 502 830 504'], ['P', '839 538 843 540 840 542'], ['P', '1254 350 1258 352 1256 355'],
    ['A', '-60 0 -60 345 0 405 30 480 45 560 75 610 95 650 120 660 135 700 145 750 165 800 175 860 190 905 215 945 240 985 255 1005 240 1040 238 1100 236 1180 232 1280 238 1400 255 1460 272 1560 275 1700 1095 1700 1105 1560 1115 1460 1128 1400 1150 1370 1195 1345 1210 1330 1195 1290 1200 1250 1230 1215 1260 1195 1275 1225 1285 1260 1300 1240 1360 1170 1400 1110 1410 1040 1380 1060 1340 1080 1310 1060 1320 1010 1280 990 1215 1030 1250 950 1275 905 1400 895 1435 830 1460 810 1462 700 1440 650 1400 600 1375 560 1355 520 1345 450 1330 380 1310 320 1300 285 1292 340 1285 395 1255 430 1235 415 1225 370 1213 300 1215 250 1185 228 1165 180 1140 145 1105 150 1075 135 1060 170 1068 240 1070 330 1065 400 1085 470 1088 540 1070 610 1035 650 1045 720 1050 790 1030 830 1010 800 990 750 988 625 935 615 870 525 840 495 805 510 795 430 775 380 765 320 770 240 800 170 815 110 850 36 850 0'],
    ['A', '92 685 118 690 112 740 118 800 105 770 95 720'], ['A', '150 880 185 900 210 960 190 950 165 910'],
    ['A', '1435 880 1460 830 1452 900 1480 918 1500 945 1512 1000 1516 1065 1480 1075 1460 1045 1418 1035 1408 1000 1420 930'],
    ['A', '1322 928 1352 950 1350 968 1325 950'],
    ['A', '1155 0 1165 50 1195 90 1235 130 1262 170 1300 222 1302 190 1272 120 1268 80 1250 0'],
    ['A', '900 0 905 50 930 55 935 90 950 60 958 36 958 0'], ['A', '985 0 987 45 1018 65 1022 0'], ['A', '958 150 968 108 985 105 992 125 975 158'],
    ['A', '1056 70 1072 80 1068 92'], ['A', '1076 55 1088 75 1082 90'], ['A', '1026 150 1040 165 1036 205 1024 190'], ['A', '1236 280 1246 285 1240 302'],
    ['A', '1545 0 1560 60 1590 130 1600 200 1640 290 1690 340 1705 290 1718 200 1760 130 1800 80 1870 0'],
    ['E', '45 0 60 55 95 75 130 62 165 36 170 0'],
    ['E', '745 0 745 40 728 70 720 100 690 140 665 165 660 230 668 300 670 360 690 420 720 445 750 435 780 400 800 380 810 400 825 440 830 500 848 560 850 610 885 605 890 570 925 560 930 500 945 440 945 415 920 395 975 395 995 330 955 290 960 200 975 150 1000 90 1030 60 1040 0'],
    ['E', '1055 0 1045 100 1055 170 1048 260 1060 300 1100 290 1200 270 1200 0'],
    ['E', '1200 345 1130 350 1075 365 1065 430 1100 450 1100 490 1060 470 1045 540 1042 600 1030 640 985 665 975 645 940 650 885 685 830 680 790 665 765 640 750 640 745 590 740 540 755 490 790 470 795 500 775 560 772 640 745 700 715 715 690 710 665 755 650 800 625 850 590 865 583 930 550 950 525 935 508 935 515 985 480 985 440 985 440 1010 480 1040 500 1080 518 1110 520 1200 512 1250 440 1245 370 1230 335 1250 340 1320 345 1400 335 1470 345 1560 510 1560 520 1500 545 1480 545 1400 580 1350 610 1320 630 1285 620 1260 680 1255 700 1250 740 1205 770 1200 790 1240 820 1290 850 1330 890 1360 915 1400 935 1430 920 1490 935 1490 950 1430 935 1392 965 1395 985 1400 970 1370 905 1330 885 1280 850 1230 840 1170 870 1140 890 1200 920 1250 980 1290 1000 1310 1005 1400 1030 1450 1060 1560 1100 1560 1100 1430 1085 1380 1120 1355 1160 1350 1200 1370'],
    ['E', '430 410 480 400 475 460 505 470 500 520 480 570 500 590 530 640 540 690 555 730 555 760 590 760 585 810 560 830 585 845 560 870 500 880 460 890 415 920 430 890 455 850 480 840 430 830 425 810 450 790 440 760 450 740 475 745 480 680 440 670 430 640 415 600 420 530 405 500 415 450'],
    ['E', '385 620 405 640 420 680 412 740 405 800 350 825 305 820 310 790 330 760 305 740 320 700 350 680 360 640'],
    ['E', '375 440 395 420 390 460 378 500'], ['E', '518 260 530 280 515 340'], ['E', '378 160 400 150 385 210'], ['E', '472 370 485 370 478 395'],
    ['E', '812 580 840 585 838 640 820 635'], ['E', '780 600 800 600 802 645 782 640'], ['E', '975 490 990 455 1000 462 980 515'], ['E', '1010 285 1030 300 1015 310'], ['E', '1070 380 1090 400 1070 420'], ['E', '895 615 910 625 900 635'],
    ['E', '755 1285 770 1260 775 1310 765 1335'], ['E', '745 1360 775 1345 775 1440 750 1440'], ['E', '840 1490 905 1480 910 1560 870 1540'], ['E', '620 1560 660 1530 740 1528 780 1522 815 1530 820 1560'], ['E', '605 1415 625 1400 622 1425'], ['E', '575 1445 585 1440 580 1455'], ['E', '640 1400 652 1405 646 1410'],
    ['E', '1130 1420 1150 1430 1135 1450'], ['E', '1165 1470 1200 1440 1200 1560 1165 1520']
  ].map(([g, s]) => rough(pts(g, s), true, 0.5)).join('');

  el('rect', { x: 416, y: 792, width: 2758, height: 500, fill: '#b1d2dd' });
  el('path', { d: land, fill: 'none', stroke: '#9d93b4', 'stroke-width': 14.4, 'stroke-linejoin': 'round' });
  el('path', { d: land, fill: 'none', stroke: '#b1d2dd', 'stroke-width': 12, 'stroke-linejoin': 'round' });
  // Hudson Bay and the Gulf of St. Lawrence carry no offshore limit.
  el('path', { d: 'M' + pts('A', '760 36 1305 36 1296 290 1270 430 1100 460 1100 600 1050 830 960 700 900 560 780 480').join('L') + 'Z', fill: '#b1d2dd' });
  el('path', { d: 'M' + pts('A', '1240 960 1440 840 1430 1020 1340 1070').join('L') + 'Z', fill: '#b1d2dd' });
  el('path', { d: land, fill: '#f2efea', stroke: '#b8d5dd', 'stroke-width': 0.5 });

  const lakes = [
    ['A', '808 1085 850 1040 880 1010 900 985 935 1000 950 1050 960 1080 930 1085 900 1092 882 1050 860 1080 830 1088'],
    ['A', '895 1130 920 1115 960 1112 945 1150 930 1180 915 1230 912 1300 898 1325 888 1290 890 1210'],
    ['A', '955 1110 985 1130 1005 1190 990 1230 975 1190 965 1150'], ['A', '975 1330 1010 1300 1050 1270 1055 1280 1010 1330'], ['A', '1045 1222 1100 1190 1105 1205 1050 1238'],
    ['A', '690 690 710 700 720 760 735 830 745 870 725 860 705 800 690 740'], ['A', '668 810 700 820 705 850 680 840'],
    ['A', '380 215 400 200 415 165 440 190 480 125 498 130 450 205 432 235 400 250'], ['A', '340 70 360 65 362 110 380 120 345 120'],
    ['A', '480 385 500 345 520 355 560 355 575 375 520 375 490 392'], ['A', '625 440 640 450 630 520 620 510'], ['A', '400 600 412 605 405 625'],
    ['A', '440 1320 456 1335 455 1365 442 1350'], ['A', '1135 880 1155 845 1158 850 1140 885'], ['A', '1222 830 1235 830 1232 860'], ['A', '1265 660 1300 670 1310 690 1275 690'],
    ['E', '845 365 880 360 875 385 850 400'], ['E', '885 400 895 390 890 420']
  ].map(([g, s]) => rough(pts(g, s), true, 0.4)).join('');
  el('path', { d: lakes, fill: '#b1d2dd' });

  // Small lakes and fjords: short water strokes scattered by region.
  function speckle(g, x0, y0, x1, y1, n, len, w) {
    let d = '';
    for (let i = 0; i < n; i++) {
      const [x, y] = at(g, x0 + rnd() * (x1 - x0), y0 + rnd() * (y1 - y0));
      d += `M${x.toFixed(1)} ${y.toFixed(1)}l${((rnd() - 0.5) * len).toFixed(1)} ${((rnd() - 0.4) * len).toFixed(1)}l${((rnd() - 0.5) * len).toFixed(1)} ${(rnd() * len * 0.6).toFixed(1)}`;
    }
    el('path', { d, fill: 'none', stroke: '#b1d2dd', 'stroke-width': w, 'stroke-linecap': 'round' });
  }
  speckle('A', 430, 40, 760, 520, 200, 4, 1); speckle('A', 560, 520, 760, 700, 60, 4, 0.9); speckle('A', 230, 40, 430, 300, 50, 4, 0.9);
  speckle('A', 1090, 200, 1200, 880, 130, 4, 1); speckle('A', 1220, 460, 1340, 800, 110, 5, 1.1); speckle('A', 780, 860, 1000, 1000, 60, 4, 1);
  speckle('A', 20, 420, 110, 640, 60, 14, 1.2); speckle('A', 120, 620, 200, 900, 40, 10, 1.1); speckle('A', 1350, 560, 1430, 640, 30, 6, 1.2);
  speckle('A', 150, 560, 320, 900, 30, 6, 0.8); speckle('A', 720, 980, 800, 1100, 26, 4, 1); speckle('A', 0, 60, 200, 400, 30, 7, 0.7);
  speckle('A', 320, 1000, 720, 1080, 22, 6, 0.8); speckle('A', 250, 1100, 740, 1500, 30, 4, 0.8);
  speckle('P', 920, 180, 975, 320, 60, 5, 1.3); speckle('P', 1215, 235, 1265, 300, 40, 9, 1.3); speckle('P', 1440, 370, 1568, 700, 90, 12, 1.3); speckle('P', 985, 360, 1120, 400, 16, 5, 1);
  speckle('P', 1020, 280, 1040, 390, 16, 3, 1); speckle('P', 190, 330, 215, 385, 12, 5, 1.3);
  speckle('E', 665, 170, 740, 400, 80, 9, 1); speckle('E', 1060, 50, 1180, 240, 70, 5, 1); speckle('E', 850, 60, 960, 520, 60, 4, 0.9);
  speckle('E', 375, 400, 430, 600, 40, 8, 1.2); speckle('E', 885, 1190, 990, 1300, 20, 5, 1.4); speckle('E', 740, 1040, 800, 1110, 14, 4, 0.9); speckle('E', 1085, 1370, 1184, 1536, 80, 9, 2); speckle('E', 960, 395, 1000, 420, 10, 5, 1);

  const border = (list, w, o, amp) => el('path', { d: list.map(([g, s]) => rough(pts(g, s), false, amp)).join(''), fill: 'none', stroke: '#b39bb5', 'stroke-width': w, opacity: o });
  border([
    ['A', '255 968 760 968'], ['A', '-60 36 -60 295'], ['A', '0 316 763 316'], ['A', '314 316 314 690'], ['A', '492 316 492 968'], ['A', '636 36 636 640'], ['A', '640 640 646 968'], ['A', '758 968 758 760 867 525'], ['A', '1037 855 1037 1075'], ['A', '1317 806 1436 806'],
    ['A', '240 1308 474 1308'], ['A', '314 1308 314 1442 370 1536'], ['A', '421 1308 421 1536'], ['A', '368 968 368 1308'], ['A', '474 1168 474 1354 634 1354 634 1536'], ['A', '474 1168 600 1168'], ['A', '600 968 600 1354'], ['A', '600 1122 733 1122'], ['A', '600 1263 697 1263'], ['A', '634 1399 755 1399'], ['A', '510 1354 510 1536'], ['A', '735 1240 827 1240'], ['A', '748 1373 822 1373'], ['A', '840 1285 902 1285'], ['A', '895 1322 975 1322'], ['A', '1033 1310 1110 1310'], ['A', '1020 1410 1105 1410'], ['A', '1020 1310 1020 1410'], ['A', '767 1405 767 1536'], ['A', '1148 1180 1148 1310 1180 1310'], ['A', '421 1532 634 1532'], ['A', '942 1322 942 1450']
  ], 1.2, 0.75, 0);
  border([
    ['A', '-60 295 -25 295 0 385 40 330 70 430 100 540 135 570 135 650 85 655'], ['A', '133 36 140 120 165 180 190 260 235 255 250 315'], ['A', '314 690 345 780 385 860 415 960'], ['A', '385 968 385 1040 412 1100 420 1165 474 1190'], ['A', '240 1105 270 1140 330 1120 368 1120'],
    ['A', '720 968 730 1050 733 1180 735 1260 755 1370 770 1440'], ['A', '697 1263 740 1290'], ['A', '805 1090 800 1150 835 1230 845 1300 820 1370 850 1450 890 1500 880 1536'], ['A', '885 1490 940 1450 1000 1420 1020 1360'], ['A', '970 1440 1000 1530 1040 1440 1080 1420'], ['A', '758 968 800 990 830 1030 890 1005 935 1065 985 1140 990 1230'], ['A', '1195 1180 1210 1080 1230 1045 1250 1060 1250 1160'],
    ['A', '1300 290 1305 400 1320 470 1315 560 1305 640 1265 620 1255 700 1275 760 1305 825 1317 760'],
    ['P', '42 36 28 175 60 200 62 260 42 290 68 330 68 375'], ['P', '350 36 342 120 350 180 340 240 325 290 300 290'], ['P', '468 36 470 70 450 95 480 150 550 140 557 195']
  ], 1.2, 0.75, 0.6);
  border([
    ['E', '830 36 835 130 850 210 830 310 815 390'], ['E', '1060 480 1110 460 1145 445 1184 475'], ['E', '1045 560 1075 550 1160 575 1184 590'], ['E', '1085 670 1120 690 1184 640'], ['E', '1010 670 1085 670 1105 770 1110 820 1085 920 1090 980'], ['E', '885 685 890 790 900 865 840 890 840 930 880 990 945 975'], ['E', '900 865 960 905 1000 945 1085 950'],
    ['E', '720 720 718 760 690 790 695 850 650 870 620 860 605 880'], ['E', '605 875 640 920 695 945 740 970 725 1045 705 1075 690 1110 715 1130 710 1200 735 1235'], ['E', '740 1040 790 1045 840 1050 880 1030 890 985'], ['E', '705 1115 750 1105 790 1060 830 1085 870 1080 930 1060 950 985 1000 985 1040 1010 1085 1000'], ['E', '870 1080 860 1130 900 1130 935 1060 975 1110 1010 1120'], ['E', '925 1160 1000 1160 985 1290'], ['E', '925 1160 950 1230 990 1295'], ['E', '1010 1120 1035 1180 1060 1240 1120 1260 1184 1240'], ['E', '1005 1290 1050 1260 1060 1300 1080 1350'], ['E', '1005 1400 1040 1350 1100 1340'], ['E', '1085 1000 1040 1090 1010 1120'], ['E', '1085 1000 1140 1030 1184 1000'], ['E', '512 1250 570 1280 622 1275'], ['E', '340 1310 400 1320 380 1400 385 1480 370 1536'], ['E', '360 650 370 685 405 690'], ['E', '750 655 770 650'], ['E', '1040 1010 1000 990']
  ], 1.8, 0.85, 0.6);
  const grid = [];
  for (const [x0, y0, x1, y1, n, l] of [[560, 880, 700, 1240, 12, 70], [730, 700, 890, 1000, 14, 60], [900, 700, 1180, 940, 24, 55], [920, 960, 1180, 1300, 34, 40], [520, 960, 700, 1230, 10, 80], [350, 1260, 540, 1520, 14, 60], [740, 1060, 850, 1230, 10, 50], [690, 150, 950, 560, 26, 60], [1060, 60, 1180, 260, 12, 50], [1080, 500, 1180, 680, 16, 40], [430, 700, 560, 860, 3, 40], [800, 1180, 880, 1330, 6, 40]])
    for (let i = 0; i < n; i++) {
      let x = x0 + rnd() * (x1 - x0), y = y0 + rnd() * (y1 - y0), s = `${x} ${y}`;
      for (let k = 0; k < 3; k++) { x += (rnd() - 0.5) * l * 1.2; y += (rnd() - 0.3) * l; x = Math.max(x0, Math.min(x1, x)); y = Math.min(y1, y); s += ` ${x} ${y}`; }
      grid.push(['E', s]);
    }
  border(grid, 1, 0.6, 0.6);
  border([['A', '1322 36 1310 180 1325 330 1365 480 1400 590 1445 645 1470 740 1468 860 1475 920'], ['A', '1405 930 1380 980 1385 1040'], ['A', '1520 36 1568 215 1620 330 1690 380'], ['E', '0 65 65 95 105 88 150 65 182 36'], ['E', '1000 85 970 230 1000 270 1038 250 1035 120 1010 88'], ['E', '1000 270 1025 350 1184 345']], 1.3, 0.9, 0.05);
  for (const [x, y] of [[227, 474], [347, 460], [407, 376], [444, 380]]) { const p = at('E', x, y); el('circle', { cx: p[0], cy: p[1], r: 4.2, fill: 'none', stroke: '#9d93b4', 'stroke-width': 1.2 }); }

  // Labels beneath the markers
  const text = (x, y, s, c, size, w) => { const t = el('text', { x, y, class: 'm-text ' + c, 'font-size': size }); if (w) t.setAttribute('textLength', w); t.textContent = s; };
  const L = (g, x, y, s, c, w, size) => { const p = at(g, x, y); text(p[0], p[1] + 4.4, s, c, size || 12, w); };
  const dot = (g, x, y, cap) => { const p = at(g, x, y); el('circle', { cx: p[0], cy: p[1], r: 2.9, fill: '#f5f2ee', stroke: '#4a4a4a', 'stroke-width': cap ? 1.1 : 0.8 }); if (cap) el('circle', { cx: p[0], cy: p[1], r: 1.2, fill: '#4a4a4a' }); };
  L('A', 630, 139, 'Canada', 'm-country', 42); L('A', 1106, 1119, 'Ottawa', 'm-city', 38); L('A', 690, 1536, 'United States', 'm-country', 75);

  // Markers: x, y, temperature step (0 coldest – 12 hottest)
  const RAMP = ['#5b88c0', '#85b4d6', '#a5d0e3', '#d6ecf6', '#e6f5e6', '#fdfebd', '#fce79b', '#f9d387', '#f5b56f', '#ee9a5b', '#e5744b', '#d24a35', '#b2282c'];
  const mark = (x, y, t) => {
    const p = at('A', x, y), k = Math.max(0, Math.min(12, Math.round(t)));
    el('circle', { cx: p[0].toFixed(1), cy: p[1].toFixed(1), r: (4.8 + k * 0.4).toFixed(1), fill: RAMP[k], opacity: t > 9.4 ? 0.8 : 0.74 });
  };
  const M = '-24 55 1 31 53 2 -59 144 0 5 112 2 24 166 1 -26 219 1 0 262 1 45 265 3 80 235 4 76 158 3 93 176 5 20 341 2 45 335 2 87 302 5 135 418 4 141 106 2 150 250 6 157 307 7 137 577 6 212 203 6 253 85 3 292 192 5 363 91 6 414 140 5 480 143 6 508 122 5 579 55 2 357 222 8 427 232 7 390 257 11 252 298 11 291 285 8 268 392 11 365 407 10.6 385 422 9.6 423 400 7 452 346 7 458 314 6 473 398 5 520 340 4 567 366 5 605 432 5 698 402 6 571 495 6 652 520 6 613 552 6 628 600 6 655 237 3 777 400 5 782 430 6 777 239 2 803 156 2 812 114 1 836 75 2 471 532 8 464 508 6 399 539 6 360 560 10 301 557 9 285 592 9.6 311 589 10 329 622 10.8 333 622 10 327 798 1 407 615 2 258 616 5 429 645 5 457 647 6 520 582 7 577 625 7 641 652 5 672 635 4 709 584 4 733 570 5 766 551 5 892 572 5 931 634 5 706 660 7 710 692 7 766 701 8 831 692 7 851 703 7 819 724 8 874 718 7 852 747 7 790 745 8 777 768 9 784 820 9 817 820 8 846 834 8 887 792 6 888 831 6 923 824 6 684 738 8 725 786 8 670 855 9 676 876 9 717 860 9 104 686 9 100 690 8 124 660 7 128 678 7 104 735 9 169 796 7 196 785 5 180 876 7 178 862 6 186 643 2 162 666 3 162 690 3 207 668 3 239 660 3 205 708 4 266 698 5 270 747 3 277 792 3 343 704 6 377 714 5 390 684 3 347 755 2 354 762 2 372 806 3 313 825 3 288 852 3 562 696 3 570 738 3 517 686 7 510 690 7 536 726 4 600 730 5 580 780 5 553 797 6 648 798 6 651 692 3 630 760 4 525 762 5 492 732 5 467 800 5 473 760 6 984 752 5 1049 748 6 1055 792 6 1050 834 7 1017 845 8 1068 714 5 1068 617 5 1142 704 3 1042 541 4 1089 540 3 1063 416 4 1075 310 4 1207 312 2 1213 363 3 1207 404 3 1236 442 5 1278 402 5 1213 242 1 1173 204 1 1105 160 0 1068 142 3 1208 110 2 1233 42 2 1264 645 3 1355 540 8 1380 606 8 1399 629 7 1370 715 9 1377 734 9 1382 760 8 1408 736 9.4 1433 730 10 1437 710 9 1341 734 6 1318 718 5 1263 753 4 1448 772 6 1458 790 5 1068 928 6 1125 926 5 1124 1022 5 1068 1015 5 1185 1040 3 1190 1062 3 1156 1045 6 1272 902 7 1310 920 9 1320 898 7 1353 903 9 1391 888 8 1384 905 7 1303 975 10 1307 972 10 1353 1046 9.6 1385 1218 11 732 1228 8 222 910 8.6 212 962 9.8 198 946 6 405 925 1 648 924 5 1032 1034 7 896 1010 8 862 1000 8.500';
  const mv = M.split(' ').map(Number);
  // Dense corridors: x1 y1 x2 y2 spread-x spread-y count low high
  const BANDS = [
    [400, 690, 460, 740, 40, 40, 14, 5, 7], [380, 790, 640, 930, 60, 110, 56, 4.6, 6.2], [270, 860, 420, 950, 50, 80, 28, 3.5, 6], [280, 840, 400, 880, 40, 50, 14, 2, 3.4], [440, 950, 640, 960, 40, 30, 12, 5, 6.4], [570, 870, 620, 930, 40, 60, 20, 5.6, 7],
    [225, 920, 290, 970, 30, 50, 22, 6.4, 8], [240, 975, 262, 1005, 14, 24, 12, 7.4, 8.4], [640, 840, 730, 960, 30, 50, 34, 5.6, 7.4], [700, 880, 745, 930, 30, 60, 22, 6.8, 9], [768, 840, 785, 930, 18, 50, 16, 7.6, 9], [790, 900, 880, 985, 50, 50, 28, 6.8, 8.8],
    [900, 930, 1030, 950, 40, 40, 18, 6.8, 8.6], [910, 990, 1040, 1020, 40, 50, 20, 6, 8.4], [945, 1080, 1020, 1160, 22, 46, 28, 6.8, 8.4], [1000, 1080, 1060, 1100, 40, 50, 12, 6, 7.6], [1010, 1180, 1070, 1180, 26, 36, 16, 7.4, 8.8], [1060, 1215, 1130, 1160, 18, 22, 18, 8.6, 10],
    [1100, 1150, 1180, 1120, 20, 30, 20, 7.6, 9.2], [1140, 1150, 1210, 1070, 26, 30, 24, 5.8, 7.4], [1160, 1130, 1200, 1090, 16, 26, 12, 5, 6.4], [1150, 980, 1230, 1010, 36, 36, 10, 5, 7], [1225, 960, 1300, 950, 30, 26, 10, 5.4, 8], [1250, 1000, 1310, 1050, 30, 40, 16, 6.8, 8.2],
    [1256, 1110, 1300, 1160, 20, 46, 18, 8.2, 9.4], [1310, 1100, 1375, 1090, 26, 32, 22, 9.4, 10.6], [1285, 1230, 1365, 1130, 22, 30, 34, 9.8, 11.4], [1295, 1190, 1328, 1155, 18, 30, 12, 11.6, 12.2], [1287, 1230, 1290, 1235, 5, 8, 3, 11.6, 12.2], [1270, 1215, 1276, 1230, 5, 10, 4, 9, 9.4], [1375, 1080, 1388, 1120, 8, 26, 6, 9.4, 10],
    [972, 1290, 995, 1305, 10, 18, 14, 10.6, 11.4], [985, 1255, 1025, 1262, 12, 16, 9, 10, 11], [1030, 1240, 1045, 1265, 10, 14, 8, 9.4, 10], [1085, 1215, 1105, 1190, 10, 12, 7, 9.6, 10.4],
    [1420, 900, 1430, 1010, 14, 36, 18, 8.4, 9.8], [1400, 1010, 1440, 1040, 16, 22, 8, 7.8, 8.8], [1440, 830, 1456, 860, 14, 26, 7, 6, 8], [1465, 930, 1505, 1000, 22, 46, 16, 5, 6.6], [1455, 1045, 1510, 1045, 12, 26, 16, 5.8, 8]
  ];
  const tri = () => rnd() + rnd() - 1;
  for (const [x1, y1, x2, y2, sx, sy, n, lo, hi] of BANDS)
    for (let i = 0; i < n; i++) { const k = rnd(); mark(x1 + (x2 - x1) * k + tri() * sx, y1 + (y2 - y1) * k + tri() * sy, lo + rnd() * (hi - lo)); }
  for (let i = 0; i < mv.length; i += 3) mark(mv[i], mv[i + 1], mv[i + 2]);

  dot('A', 1135, 1367); L('A', 1135, 1393, 'New York', 'm-city', 48); dot('A', 1080, 1449, 1); L('A', 1081, 1481, 'Washington', 'm-city', 62);
  for (const [x, y, c] of [[800, 321, 1], [974, 363, 1], [1135, 306, 1], [783, 719, 0], [862, 777, 1], [546, 834, 1], [604, 975, 1], [924, 1128, 1], [1161, 1194, 1], [600, 1337, 0], [787, 1536, 1]]) dot('E', x, y, c);
  for (const [x, y, s, w] of [[800, 294, 'Oslo', 23], [972, 394, 'Stockholm', 54], [1134, 335, 'Helsinki', 41], [783, 697, 'Hamburg', 49], [863, 749, 'Berlin', 30], [545, 805, 'London', 39], [604, 946, 'Paris', 25], [973, 1131, 'Zagreb', 36], [1160, 1228, 'Bucureşti', 47], [600, 1315, 'Barcelona', 51], [1178, 1447, 'İzmir', 24], [787, 1514, 'تونس', 26]]) L('E', x, y, s, 'm-city', w);
  for (const [x, y, s, w] of [[905, 170, 'Sverige', 41], [1124, 403, 'Eesti', 26], [1116, 525, 'Latvija', 36], [770, 562, 'Danmark', 50], [1116, 625, 'Lietuva', 39], [456, 615, 'United Kingdom', 91], [358, 730, 'Éire / Ireland', 72], [1197, 712, 'Беларусь', 46], [679, 795, 'Nederland', 58], [999, 806, 'Polska', 36], [797, 853, 'Deutschland', 70], [913, 931, 'Česko', 32], [1010, 987, 'Slovensko', 56], [592, 1080, 'France', 37], [998, 1064, 'Magyarország', 79], [1119, 1124, 'România', 48], [904, 1200, 'Hrvatska', 49], [1042, 1212, 'Србија', 38], [1142, 1279, 'България', 54], [882, 1324, 'Italia', 28], [472, 1406, 'España', 40], [348, 1427, 'Portugal', 48], [1064, 1453, 'Ελλάς', 31]]) L('E', x, y, s, 'm-country', w);
  L('E', 497, 662, 'Great Britain', 'm-isle', 57);
  const a = at('E', 1138, 1470);
  el('circle', { cx: a[0], cy: a[1], r: 12, fill: '#fff', opacity: 0.6 });
  el('circle', { cx: a[0], cy: a[1], r: 7.5, fill: '#2b2b2e' });
  el('path', { d: `M${a[0] - 1.8} ${a[1] - 0.8}h2.600v4h1.200M${a[0] - 2} ${a[1] + 3.400}h4.200`, stroke: '#fff', 'stroke-width': 1.6, fill: 'none' });
  el('circle', { cx: a[0], cy: a[1] - 3.6, r: 1.3, fill: '#fff' });
})();
```
